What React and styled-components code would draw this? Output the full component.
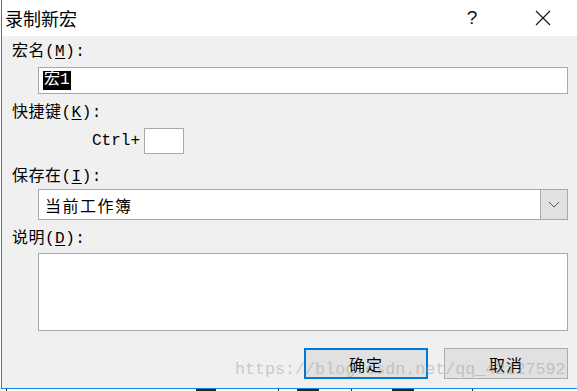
import React from 'react'
import styled, {createGlobalStyle} from 'styled-components'

const Global = createGlobalStyle`
    html, body {
        margin: 0;
        background: #ffffff;
        overflow: hidden;
    }
`
const Page = styled.div`
    width: 577px;
    height: 391px;
    padding-left: 1px;
    box-sizing: border-box;
    display: flex;
    flex-direction: column;
    position: relative;
`
const Dialog = styled.div`
    height: 389px;
    box-sizing: border-box;
    border-left: 1px solid #1c84d8;
    border-bottom: 1px solid #1c84d8;
    display: flex;
    flex-direction: column;
    background: #f0f0f0;
`
const TitleBar = styled.div`
    height: 36px;
    flex-shrink: 0;
    background: #ffffff;
    display: flex;
    align-items: center;
    padding: 0 2px 0 3px;
    font-family: "Noto Sans CJK SC", sans-serif;
`
const Title = styled.div`
    flex: 1;
    font-size: 18px;
    color: #000;
    line-height: 36px;
`
const Caption = styled.div`
    width: 64px;
    height: 36px;
    margin-left: ${p => p.$gap || 0}px;
    display: flex;
    align-items: center;
    justify-content: center;
    font-family: "Liberation Sans", sans-serif;
    font-size: 19px;
    color: #111;
`
const Body = styled.div`
    flex: 1;
    padding: 6px 9px 0 10px;
    display: flex;
    flex-direction: column;
    font-family: "Liberation Mono", "Noto Sans CJK SC", monospace;
    font-size: 16px;
    color: #000;
`
const Label = styled.div`
    height: 20px;
    line-height: 20px;
    letter-spacing: 0.5px;
    margin-top: ${p => p.$gap || 0}px;
    u { text-decoration-thickness: 1px; text-underline-offset: 2px; }
`
const Field = styled.div`
    margin: ${p => p.$top}px 0 0 26px;
    height: ${p => p.$h}px;
    box-sizing: border-box;
    border: 1px solid #a9a9a9;
    background: #ffffff;
    display: flex;
    align-items: center;
    padding-left: 4px;
`
const Selected = styled.span`
    background: #000;
    color: #fff;
    line-height: 19px;
    padding: 0 1px;
`
const KeyRow = styled.div`
    margin: 5px 0 0 80px;
    display: flex;
    align-items: center;
    gap: 4px;
`
const KeyBox = styled.div`
    width: 40px;
    height: 26px;
    box-sizing: border-box;
    border: 1px solid #a9a9a9;
    background: #fff;
`
const SelectText = styled.div`
    flex: 1;
    padding-left: 2px;
    letter-spacing: 1.5px;
`
const DropButton = styled.div`
    width: 27px;
    align-self: stretch;
    box-sizing: border-box;
    border-left: 1px solid #a9a9a9;
    background: #e1e1e1;
    display: flex;
    align-items: center;
    justify-content: center;
`
const Buttons = styled.div`
    margin-top: 17px;
    display: flex;
    justify-content: flex-end;
    gap: 16px;
`
const Button = styled.div`
    width: 124px;
    height: 31px;
    box-sizing: border-box;
    background: #e1e1e1;
    border: ${p => p.$primary ? '2px solid #0078d7' : '1px solid #adadad'};
    display: flex;
    align-items: center;
    justify-content: center;
    letter-spacing: 1px;
`
const Watermark = styled.div`
    position: absolute;
    left: 235px;
    top: 360px;
    font-family: "Liberation Mono", monospace;
    font-size: 16.7px;
    color: rgba(160, 160, 160, 0.5);
    pointer-events: none;
    white-space: nowrap;
`
const Sheet = styled.div`
    height: 2px;
    overflow: hidden;
    display: flex;
`
const Cell = styled.div`
    width: ${p => p.$w}px;
    flex-shrink: 0;
    border-left: ${p => p.$line ? '1px solid #222' : 'none'};
    box-sizing: border-box;
    display: flex;
    padding-left: ${p => p.$pad || 0}px;
`
const Ink = styled.div`
    width: ${p => p.$w}px;
    height: 2px;
    background: #222;
`

function App() {
    return (
        <>
            <Global />
            <Page>
                <Dialog>
                    <TitleBar>
                        <Title>录制新宏</Title>
                        <Caption>?</Caption>
                        <Caption $gap={7}>
                            <svg width="16" height="16" viewBox="0 0 16 16">
                                <path d="M1 1L15 15M15 1L1 15" stroke="#111" strokeWidth="1.1" fill="none" />
                            </svg>
                        </Caption>
                    </TitleBar>
                    <Body>
                        <Label>宏名(<u>M</u>):</Label>
                        <Field $top={5} $h={27}>
                            <Selected>宏1</Selected>
                        </Field>
                        <Label $gap={9}>快捷键(<u>K</u>):</Label>
                        <KeyRow>
                            <span>Ctrl+</span>
                            <KeyBox />
                        </KeyRow>
                        <Label $gap={13}>保存在(<u>I</u>):</Label>
                        <Field $top={2} $h={31}>
                            <SelectText>当前工作簿</SelectText>
                            <DropButton>
                                <svg width="12" height="7" viewBox="0 0 12 7">
                                    <path d="M1 1L6 6L11 1" stroke="#555" strokeWidth="1" fill="none" />
                                </svg>
                            </DropButton>
                        </Field>
                        <Label $gap={9}>说明(<u>D</u>):</Label>
                        <Field $top={4} $h={78} />
                        <Buttons>
                            <Button $primary>确定</Button>
                            <Button>取消</Button>
                        </Buttons>
                    </Body>
                </Dialog>
                <Sheet>
                    <Cell $w={5} />
                    <Cell $w={150} $line />
                    <Cell $w={122} $pad={40}><Ink $w={20} /></Cell>
                    <Cell $w={73} $line $pad={18}><Ink $w={22} /></Cell>
                    <Cell $w={121} $line $pad={40}><Ink $w={22} /></Cell>
                    <Cell $w={100} $line />
                </Sheet>
                <Watermark>https://blog.csdn.net/qq_42127592</Watermark>
            </Page>
        </>
    )
}

export default App
